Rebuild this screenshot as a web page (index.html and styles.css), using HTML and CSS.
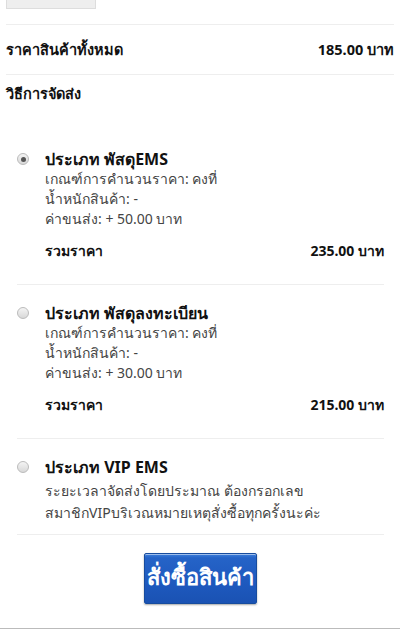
FILE: index.html
```html
<!doctype html>
<html lang="th">
    <head>
        <meta charset="utf-8">
        <link rel="stylesheet" href="styles.css">
    </head>
    <body>
        <div class="Pagina">
            <!-- Caja de cantidad (cortada arriba) -->
            <div class="Cantidad"></div>

            <div class="Total">
                <span>ราคาสินค้าทั้งหมด</span>
                <span>185.00 บาท</span>
            </div>

            <div class="Titulo">วิธีการจัดส่ง</div>

            <!-- Opciones de envio -->
            <div class="Opciones">
                <label class="Opcion">
                    <span class="Radio Marcado"></span>
                    <div class="Datos">
                        <div class="Nombre">ประเภท พัสดุEMS</div>
                        <div class="Linea">เกณฑ์การคำนวนราคา: คงที่</div>
                        <div class="Linea">น้ำหนักสินค้า: -</div>
                        <div class="Linea">ค่าขนส่ง: + 50.00 บาท</div>
                        <div class="Suma">
                            <span>รวมราคา</span>
                            <span>235.00 บาท</span>
                        </div>
                    </div>
                </label>
                <label class="Opcion">
                    <span class="Radio"></span>
                    <div class="Datos">
                        <div class="Nombre">ประเภท พัสดุลงทะเบียน</div>
                        <div class="Linea">เกณฑ์การคำนวนราคา: คงที่</div>
                        <div class="Linea">น้ำหนักสินค้า: -</div>
                        <div class="Linea">ค่าขนส่ง: + 30.00 บาท</div>
                        <div class="Suma">
                            <span>รวมราคา</span>
                            <span>215.00 บาท</span>
                        </div>
                    </div>
                </label>
                <label class="Opcion Corta">
                    <span class="Radio"></span>
                    <div class="Datos">
                        <div class="Nombre">ประเภท VIP EMS</div>
                        <div class="Nota">ระยะเวลาจัดส่งโดยประมาณ ต้องกรอกเลข<br>สมาชิกVIPบริเวณหมายเหตุสั่งซื้อทุกครั้งนะค่ะ</div>
                    </div>
                </label>
            </div>

            <div class="Boton">
                <button type="button">สั่งซื้อสินค้า</button>
            </div>
        </div>
    </body>
</html>
```

FILE: styles.css
```css
body {
    margin:0;
    background:#FFF;
    color:#111;
    font-family:"Noto Sans", "Liberation Sans", sans-serif;
    font-size:14px;
}
.Pagina {
    padding:0 6px;
    height:629px;
    border-bottom:1px solid #BBB;
    box-sizing:border-box;
}

/* Caja de cantidad, solo se ve el borde de abajo */
.Cantidad {
    width:88px;
    height:8px;
    background:#EEE;
    border:1px solid #DDD;
    border-top:0;
}

/* Fila del total */
.Total {
    display:flex;
    justify-content:space-between;
    align-items:center;
    margin-top:15px;
    height:49px;
    border-top:1px solid #EEE;
    border-bottom:1px solid #EEE;
    font-weight:bold;
    font-size:14.5px;
}
.Titulo {
    font-weight:bold;
    font-size:14.5px;
    line-height:20px;
    margin-top:8px;
}

/* Lista de opciones */
.Opciones {
    margin:46px 10px 0 11px;
}
.Opcion {
    display:flex;
    gap:16px;
    padding:18px 0 23px;
    border-bottom:1px solid #EEE;
}
.Opcion.Corta { padding-bottom:10px; }
.Opciones .Opcion:first-child { padding-top:0; }

/* Radio dibujado con css */
.Radio {
    flex:none;
    width:12px;
    height:12px;
    margin-top:4px;
    border-radius:50%;
    border:1px solid #BBB;
    background:linear-gradient(#F4F4F4, #D8D8D8);
    box-sizing:border-box;
    display:flex;
    align-items:center;
    justify-content:center;
}
.Radio.Marcado::after {
    content:"";
    width:5px;
    height:5px;
    border-radius:50%;
    background:#555;
}

.Datos { flex:1; }
.Nombre {
    font-weight:bold;
    font-size:16px;
    line-height:20px;
}
.Linea {
    color:#444;
    line-height:20px;
}
.Nota {
    color:#444;
    line-height:22px;
    margin-top:3px;
}
.Suma {
    display:flex;
    justify-content:space-between;
    margin-top:12px;
    line-height:20px;
    font-weight:bold;
}

/* Boton de comprar */
.Boton {
    display:flex;
    justify-content:center;
    margin-top:18px;
}
.Boton button {
    width:113px;
    height:51px;
    padding:0 0 2px;
    border:1px solid #174C9E;
    border-radius:2px;
    background:linear-gradient(#3D7FDB 0, #2563C7 8%, #1E59BE 60%, #1A52B3 100%);
    box-shadow:0 1px 2px rgba(0,0,0,0.35), inset 0 1px 0 rgba(255,255,255,0.5);
    color:#FFF;
    font-family:"Noto Sans", "Liberation Sans", sans-serif;
    font-size:22px;
    font-weight:bold;
}
```
